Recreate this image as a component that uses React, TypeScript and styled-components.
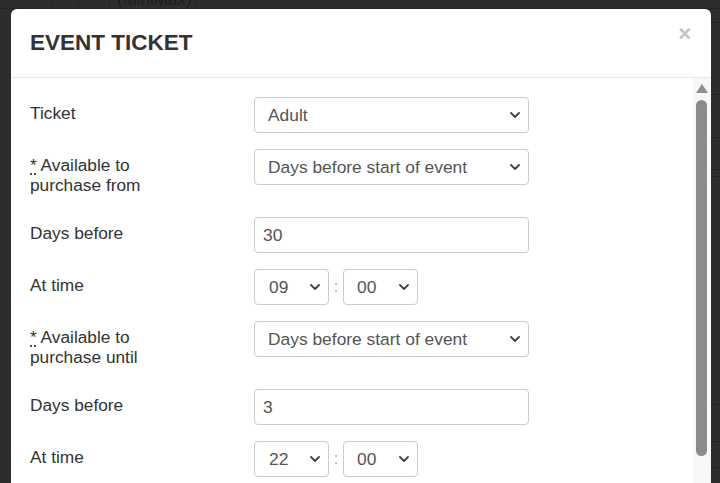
import React from "react";
import styled, { createGlobalStyle } from "styled-components";

const Global = createGlobalStyle`
  html, body { margin: 0; padding: 0; height: 100%; overflow: hidden; background: #2d2d2d; }
  body { font-family: "Liberation Sans", Arial, sans-serif; }
  #root { height: 100%; }
`;

const Screen = styled.div`
  position: relative;
  width: 720px;
  height: 483px;
  overflow: hidden;
  background: #2d2d2d;
`;

/* ---------- page behind the backdrop ---------- */
const Behind = styled.div`
  display: flex;
  flex-direction: column;
  height: 100%;
`;

const TopStrip = styled.div`
  display: flex;
  height: 8px;
  border-bottom: 1px solid #242424;
  overflow: hidden;
`;

const TopCell = styled.div<{ $w: number }>`
  width: ${(p) => p.$w}px;
  flex: none;
  border-right: 1px solid #272727;
  display: flex;
  align-items: flex-end;
  overflow: hidden;
`;

const BehindText = styled.span`
  font-size: 17px;
  line-height: 17px;
  color: #1d1d1d;
  padding-left: 7px;
  white-space: nowrap;
`;

const SideRows = styled.div`
  margin-left: auto;
  width: 30px;
  display: flex;
  flex-direction: column;
`;

const SideRow = styled.div<{ $h: number }>`
  height: ${(p) => p.$h}px;
  border-bottom: 1px solid #242424;
  flex: none;
`;

/* ---------- modal ---------- */
const Modal = styled.div`
  position: absolute;
  top: 9px;
  left: 11px;
  width: 700px;
  height: 540px;
  background: #fff;
  border-radius: 6px 6px 0 0;
  display: flex;
  flex-direction: column;
  overflow: hidden;
`;

const Header = styled.div`
  height: 68px;
  flex: none;
  display: flex;
  align-items: center;
  justify-content: space-between;
  padding: 0 20px 0 19px;
  border-bottom: 1px solid #e8e8e8;
`;

const Title = styled.h4`
  margin: 0;
  font-size: 22.5px;
  font-weight: bold;
  color: #333;
`;

const Close = styled.button`
  align-self: flex-start;
  margin-top: 15px;
  border: 0;
  background: none;
  padding: 0;
  font-family: "Liberation Sans", Arial, sans-serif;
  font-size: 22px;
  line-height: 20px;
  font-weight: bold;
  color: #c2c2c2;
  cursor: pointer;
`;

const Body = styled.div`
  flex: 1;
  display: flex;
`;

const Form = styled.form`
  flex: 1;
  padding: 19px 0 0 19px;
`;

const Row = styled.div`
  display: grid;
  grid-template-columns: 224px 275px;
  align-items: start;
  margin-bottom: 16px;
`;

const Label = styled.label<{ $tall?: boolean }>`
  width: 165px;
  font-size: 17.3px;
  line-height: 20px;
  color: #333;
  padding-top: 6px;
  padding-bottom: ${(p) => (p.$tall ? "6px" : "0")};
`;

const Req = styled.abbr`
  text-decoration: underline dotted;
  text-underline-offset: 3px;
  cursor: help;
`;

const Field = styled.div<{ $w?: number }>`
  position: relative;
  width: ${(p) => (p.$w ? `${p.$w}px` : "100%")};
`;

const Select = styled.select<{ $pad?: number }>`
  appearance: none;
  -webkit-appearance: none;
  display: block;
  width: 100%;
  height: 36px;
  margin: 0;
  border: 1px solid #ccc;
  border-radius: 4px;
  background: #fff;
  padding: 0 28px 0 ${(p) => p.$pad ?? 13}px;
  font-family: "Liberation Sans", Arial, sans-serif;
  font-size: 17.4px;
  color: #555;
  outline: none;
`;

const Chevron = styled.svg`
  position: absolute;
  right: 9px;
  top: 50%;
  margin-top: -3px;
  width: 10px;
  height: 6px;
  pointer-events: none;
`;

const Input = styled.input`
  display: block;
  box-sizing: border-box;
  width: 100%;
  height: 36px;
  margin: 0;
  border: 1px solid #ccc;
  border-radius: 4px;
  padding: 0 8px;
  font-family: "Liberation Sans", Arial, sans-serif;
  font-size: 17.4px;
  color: #555;
  outline: none;
`;

const TimeGroup = styled.div`
  display: flex;
  align-items: center;
`;

const Colon = styled.span`
  width: 14px;
  text-align: center;
  font-size: 16px;
  color: #aaa;
`;

const Scrollbar = styled.div`
  width: 18px;
  flex: none;
  background: #f8f8f8;
  display: flex;
  flex-direction: column;
  align-items: center;
  padding-top: 6px;
`;

const Arrow = styled.svg`
  width: 12px;
  height: 9px;
  margin-left: -1px;
`;

const Thumb = styled.div`
  margin-top: 7px;
  width: 11px;
  height: 356px;
  border-radius: 6px;
  background: #8b8b8b;
  margin-left: -1px;
`;

const ChevronIcon = () => (
  <Chevron viewBox="0 0 10 6">
    <path d="M1 1l4 4 4-4" fill="none" stroke="#444" strokeWidth="1.8" strokeLinecap="round" strokeLinejoin="round" />
  </Chevron>
);

const SelectField = ({ value, options, w, pad }: { value: string; options: string[]; w?: number; pad?: number }) => (
  <Field $w={w}>
    <Select defaultValue={value} $pad={pad}>
      {options.map((o) => (
        <option key={o}>{o}</option>
      ))}
    </Select>
    <ChevronIcon />
  </Field>
);

const hours = Array.from({ length: 24 }, (_, i) => String(i).padStart(2, "0"));
const mins = ["00", "15", "30", "45"];
const whenOpts = ["Days before start of event", "Date"];

const TimeField = ({ h, m }: { h: string; m: string }) => (
  <TimeGroup>
    <SelectField value={h} options={hours} w={75} pad={14} />
    <Colon>:</Colon>
    <SelectField value={m} options={mins} w={75} pad={13} />
  </TimeGroup>
);

export default function App() {
  return (
    <Screen>
      <Global />
      <Behind>
        <TopStrip>
          <TopCell $w={52} />
          <TopCell $w={25} />
          <TopCell $w={30} />
          <TopCell $w={86}>
            <BehindText>(MiniMax)</BehindText>
          </TopCell>
        </TopStrip>
        <SideRows>
          <SideRow $h={13} />
          <SideRow $h={71} />
          <SideRow $h={42} />
          <SideRow $h={31} />
          <SideRow $h={6} />
          <SideRow $h={227} />
          <SideRow $h={36} />
          <SideRow $h={25} />
        </SideRows>
      </Behind>

      <Modal role="dialog">
        <Header>
          <Title>EVENT TICKET</Title>
          <Close aria-label="Close">×</Close>
        </Header>
        <Body>
          <Form>
            <Row>
              <Label>Ticket</Label>
              <SelectField value="Adult" options={["Adult", "Child", "Concession"]} />
            </Row>
            <Row>
              <Label $tall>
                <Req title="required">*</Req> Available to purchase from
              </Label>
              <SelectField value={whenOpts[0]} options={whenOpts} />
            </Row>
            <Row>
              <Label>Days before</Label>
              <Input defaultValue="30" />
            </Row>
            <Row>
              <Label>At time</Label>
              <TimeField h="09" m="00" />
            </Row>
            <Row>
              <Label $tall>
                <Req title="required">*</Req> Available to purchase until
              </Label>
              <SelectField value={whenOpts[0]} options={whenOpts} />
            </Row>
            <Row>
              <Label>Days before</Label>
              <Input defaultValue="3" />
            </Row>
            <Row>
              <Label>At time</Label>
              <TimeField h="22" m="00" />
            </Row>
          </Form>
          <Scrollbar>
            <Arrow viewBox="0 0 12 9">
              <path d="M6 0L12 9H0z" fill="#8e8e8e" />
            </Arrow>
            <Thumb />
          </Scrollbar>
        </Body>
      </Modal>
    </Screen>
  );
}
